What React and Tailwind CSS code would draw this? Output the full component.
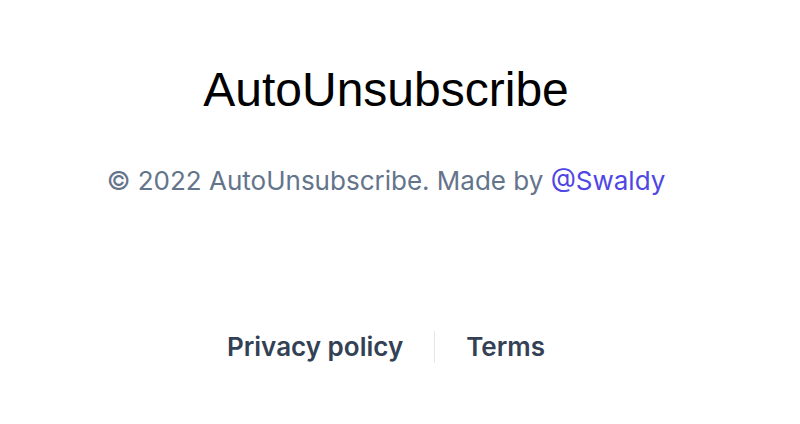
export default function App() {
  return (
    <div className="min-h-[424px] bg-white pr-[28px] font-['Inter',sans-serif]">
      <div className="flex flex-col items-center pt-[62px]">
        <h1 className="text-[48px] leading-[56px] text-black font-['Liberation_Sans',Arial,sans-serif]">
          AutoUnsubscribe
        </h1>
        <p className="mt-[47px] text-[26px] leading-[32px] text-[#64748b]">
          © 2022 AutoUnsubscribe. Made by{' '}
          <a href="#" className="text-[#4f46e5]">@Swaldy</a>
        </p>
      </div>
      <nav className="mt-[134px] flex items-center justify-center">
        <a href="#" className="text-[26px] leading-[32px] font-semibold text-[#334155]">Privacy policy</a>
        <span className="mx-[31px] h-[32px] w-px bg-[#e5e7eb]"></span>
        <a href="#" className="text-[26px] leading-[32px] font-semibold text-[#334155]">Terms</a>
      </nav>
    </div>
  )
}
